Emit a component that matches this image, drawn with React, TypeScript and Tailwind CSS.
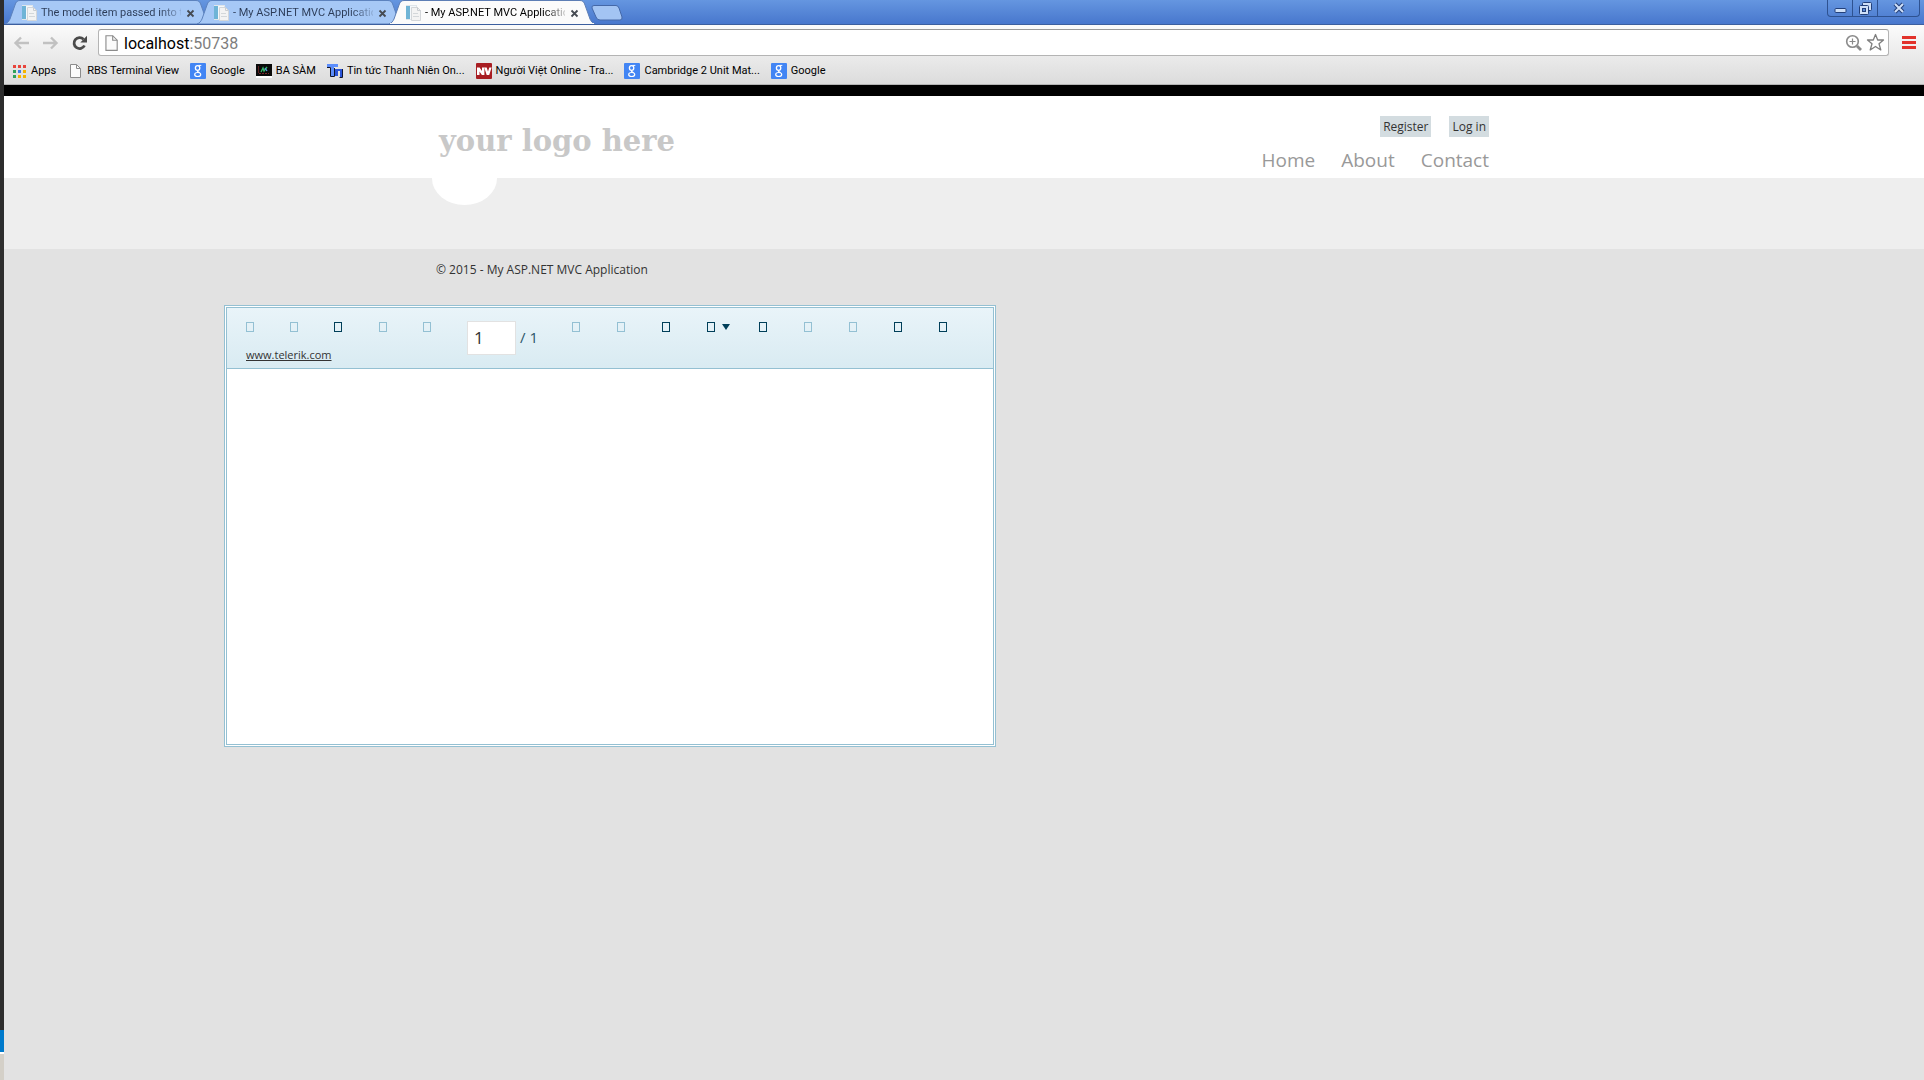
import type { ReactNode } from "react";

const TABS = [
  { title: "The model item passed into t", active: false },
  { title: "- My ASP.NET MVC Applicatio", active: false },
  { title: "- My ASP.NET MVC Applicatio", active: true },
];

const MENU = ["Home", "About", "Contact"];

type Tool = { label: string; enabled?: boolean; menu?: boolean };

const LEFT_TOOLS: Tool[] = [
  { label: "Navigate back" },
  { label: "Navigate forward" },
  { label: "Refresh", enabled: true },
  { label: "First page" },
  { label: "Previous page" },
];

const RIGHT_TOOLS: Tool[] = [
  { label: "Next page" },
  { label: "Last page" },
  { label: "Print preview", enabled: true },
  { label: "Export", enabled: true, menu: true },
  { label: "Print", enabled: true },
  { label: "Document map" },
  { label: "Parameters" },
  { label: "Zoom in", enabled: true },
  { label: "Zoom out", enabled: true },
];

function TabFavicon() {
  return (
    <svg width="16" height="16" viewBox="0 0 16 16" className="shrink-0">
      <rect x="0.5" y="0.5" width="10" height="14" fill="#f4f8fb" stroke="#dfe5ea" />
      <rect x="0" y="1" width="4" height="13" fill="#6fb4d6" />
      <path d="M5.5 2.5h6l3 3v10h-9z" fill="#f3f3f3" stroke="#d3d6d9" />
      <path d="M11.5 2.5v3h3" fill="none" stroke="#c9cdd1" />
      <path d="M7 8.5h5M7 11.5h6" stroke="#d3d7da" />
    </svg>
  );
}

function PageIcon({ size }: { size: number }) {
  return (
    <svg width={size} height={size} viewBox="0 0 16 16" className="shrink-0">
      <path d="M3.5 1.5h6l4 4v9h-10z" fill="#fbfbfb" stroke="#8c8c8c" />
      <path d="M9.5 1.5v4h4" fill="none" stroke="#8c8c8c" />
    </svg>
  );
}

function AppsIcon() {
  return (
    <svg width="13" height="13" viewBox="0 0 13 13" className="shrink-0">
      <path d="M0 0h3v3H0zM5 0h3v3H5zM10 0h3v3h-3z" fill="#e8453c" />
      <path d="M0 5h3v3H0zM0 10h3v3H0z" fill="#2fa25b" />
      <path d="M5 5h3v3H5z" fill="#3f7ee8" />
      <path d="M10 5h3v3h-3zM5 10h3v3H5zM10 10h3v3h-3z" fill="#f4b400" />
    </svg>
  );
}

function GoogleIcon() {
  return (
    <svg width="16" height="16" viewBox="0 0 16 16" className="shrink-0">
      <rect width="16" height="16" rx="1" fill="#4285f4" />
      <g fill="none" stroke="#fff">
        <ellipse cx="7.6" cy="5" rx="2.2" ry="2.4" strokeWidth="1.3" />
        <path d="M8.5 2.4h2.8" />
        <path d="M8 7.4c-1.4 1 .6 1.6 1.6 2.4" strokeWidth="1.2" />
        <ellipse cx="7.7" cy="11.5" rx="3" ry="2" strokeWidth="1.2" />
      </g>
    </svg>
  );
}

function ChartIcon() {
  return (
    <svg width="16" height="16" viewBox="0 0 16 16" className="shrink-0">
      <rect width="16" height="14" y="1" fill="#fff" />
      <rect width="16" height="12" y="1" fill="#0a0a0a" />
      <path d="M5 9l2-4 1 3 3-4" fill="none" stroke="#35b868" strokeWidth="1.3" />
      <path d="M9 5l2 3" stroke="#5c9cf0" strokeWidth="1.3" />
      <path d="M2.5 3v7" stroke="#5a2020" />
      <path d="M3 10.5h10" stroke="#7a2a2a" strokeDasharray="2 1" />
    </svg>
  );
}

function ThanhNienIcon() {
  return (
    <svg width="16" height="14" viewBox="0 0 16 14" className="shrink-0">
      <path d="M0 0h11v3H7v9H4V3H0z" fill="#5b8dfb" />
      <path d="M8 5h7v8h-2V7h-2v5H8z" fill="#2a54d8" />
      <path d="M0 3.5h3.5v9h4M7.5 4v8.5M15.5 5v8.5h-3" fill="none" stroke="#10152c" />
    </svg>
  );
}

function NvIcon() {
  return (
    <svg width="16" height="16" viewBox="0 0 16 16" className="shrink-0">
      <rect width="16" height="16" rx="1" fill="#a81d22" />
      <path d="M1 4.5h2.600l2.400 3.500V4.500h2.400V12H5.900L3.500 8.500V12H1z" fill="#fff" />
      <path d="M8.200 4.500h2.500l1.300 4 1.300-4H15.600L13.200 12h-2.500z" fill="#fff" />
    </svg>
  );
}

const BOOKMARKS: { label: string; icon: ReactNode }[] = [
  { label: "Apps", icon: <AppsIcon /> },
  { label: "RBS Terminal View", icon: <PageIcon size={16} /> },
  { label: "Google", icon: <GoogleIcon /> },
  { label: "BA SÀM", icon: <ChartIcon /> },
  { label: "Tin tức Thanh Niên On...", icon: <ThanhNienIcon /> },
  { label: "Người Việt Online - Tra...", icon: <NvIcon /> },
  { label: "Cambridge 2 Unit Mat...", icon: <GoogleIcon /> },
  { label: "Google", icon: <GoogleIcon /> },
];

function BrowserTab({ title, active }: { title: string; active: boolean }) {
  return (
    <div className={`relative -mr-[14px] h-6 w-[206px] ${active ? "z-20" : "z-10"}`}>
      <svg className="absolute inset-0" width="206" height="24" viewBox="0 0 206 24">
        <path
          d="M0 24C3 23 4 21 5 19L10 5C11 2 12 .5 15 .5H191C194 .5 195 2 196 5L201 19C202 21 203 23 206 24Z"
          fill={active ? "#fbfbfb" : "#a6c8f6"}
          stroke={active ? "#5d7eb5" : "#5c82be"}
        />
        {active && <path d="M1 24H205" stroke="#fbfbfb" strokeWidth="2" />}
      </svg>
      <div className="relative flex h-6 items-center pt-0.5 pl-[17px]">
        <TabFavicon />
        <span
          className={`ml-[3px] w-[140px] overflow-hidden bg-linear-to-r bg-clip-text whitespace-nowrap text-transparent ${
            active ? "from-black from-85% to-black/20" : "from-[#2c3c58] from-85% to-[#2c3c58]/20"
          }`}
        >
          {title}
        </span>
        <button type="button" aria-label="Close tab" className="ml-[5px]">
          <svg width="9" height="9" viewBox="0 0 9 9">
            <path d="M1.5 1.5l6 6M7.5 1.5l-6 6" stroke="#454a52" strokeWidth="1.8" />
          </svg>
        </button>
      </div>
    </div>
  );
}

function WindowControls() {
  return (
    <div className="mr-1 ml-auto flex h-[17px] rounded-b border border-t-0 border-[#2e5291] text-[#23407a]">
      <button type="button" aria-label="Minimize" className="flex w-6 items-center justify-center">
        <svg width="13" height="13" viewBox="0 0 13 13">
          <rect x="1" y="6.5" width="11" height="4" rx="1" fill="#cfe0f8" stroke="currentColor" />
        </svg>
      </button>
      <button
        type="button"
        aria-label="Restore"
        className="flex w-[26px] items-center justify-center border-x border-[#2e5291]"
      >
        <svg width="13" height="13" viewBox="0 0 13 13" fill="#cfe0f8" stroke="currentColor">
          <rect x="3.5" y="0.5" width="9" height="8" rx="1" />
          <rect x="0.5" y="3.5" width="9" height="9" rx="1" />
          <rect x="3.5" y="6.5" width="3" height="3" fill="#5b8bd8" />
        </svg>
      </button>
      <button type="button" aria-label="Close" className="flex w-[41px] items-center justify-center">
        <svg width="12" height="12" viewBox="0 0 12 12">
          <path d="M2 2l8 8M10 2l-8 8" stroke="currentColor" strokeWidth="4" />
          <path d="M2 2l8 8M10 2l-8 8" stroke="#cfe0f8" strokeWidth="2" />
        </svg>
      </button>
    </div>
  );
}

function BrowserChrome() {
  return (
    <div className="font-[Roboto,'Noto_Sans',sans-serif] text-[11px] text-black">
      <div className="flex h-[25px] items-start border-b border-[#3c5f9f] bg-linear-to-b from-[#6596e0] to-[#4877cd]">
        <div className="flex pl-px">
          {TABS.map((tab, i) => (
            <BrowserTab key={i} title={tab.title} active={tab.active} />
          ))}
        </div>
        <button type="button" aria-label="New tab" className="mt-[5px] ml-[10px]">
          <svg width="32" height="16" viewBox="0 0 32 16">
            <path
              d="M3 .5H25Q27 .5 28 3L31 12Q31.5 15 29 15H9Q6 15 5 12L1 3Q.5 .5 3 .5Z"
              fill="#a3c4f3"
              stroke="#4468a8"
            />
          </svg>
        </button>
        <WindowControls />
      </div>

      <div className="border-b border-[#b3b3b3] bg-linear-to-b from-[#fbfbfb] to-[#dcdcdc]">
        <div className="flex items-center pt-1 pr-2 pl-[9px]">
          <button type="button" aria-label="Back" className="mr-3">
            <svg width="17" height="16" viewBox="0 0 17 16">
              <path d="M8 2.5L2.5 8L8 13.5M3 8H16" fill="none" stroke="#c1c1c1" strokeWidth="2.4" />
            </svg>
          </button>
          <button type="button" aria-label="Forward" className="mr-3">
            <svg width="17" height="16" viewBox="0 0 17 16">
              <path d="M9 2.5L14.5 8L9 13.5M14 8H1" fill="none" stroke="#c1c1c1" strokeWidth="2.4" />
            </svg>
          </button>
          <button type="button" aria-label="Reload" className="mr-[10px]">
            <svg width="17" height="16" viewBox="0 0 17 16">
              <path d="M12.5 4.2A5.5 5.5 0 1 0 13.5 10.5" fill="none" stroke="#4b4b4b" strokeWidth="2.8" />
              <path d="M16 .8V7.5H9.3Z" fill="#4b4b4b" />
            </svg>
          </button>
          <div className="flex h-[27px] min-w-0 flex-1 items-center rounded-[3px] border border-[#b4b4b4] border-t-[#9a9a9a] bg-white px-[3px]">
            <PageIcon size={18} />
            <div role="textbox" aria-label="Address" className="ml-1 flex-1 pt-0.5 text-base leading-6">
              localhost<span className="text-[#7d7d7d]">:50738</span>
            </div>
            <button type="button" aria-label="Zoom" className="mr-[3px]">
              <svg width="18" height="18" viewBox="0 0 18 18" fill="none" stroke="#8a8a8a">
                <circle cx="7.5" cy="7.5" r="5.8" strokeWidth="1.6" />
                <path d="M12 12l4 4" strokeWidth="2.8" />
                <path d="M4.5 7.5h6M7.5 4.5v6" strokeWidth="1.2" />
              </svg>
            </button>
            <button type="button" aria-label="Bookmark this page">
              <svg width="19" height="19" viewBox="0 0 19 19" fill="none" stroke="#7f7f7f" strokeWidth="1.3">
                <path
                  d="M9.5 1.5L11.7 7H17.5L13 10.8L14.8 17L9.5 13.5L4.2 17L6 10.8L1.5 7H7.3Z"
                  strokeLinejoin="round"
                />
              </svg>
            </button>
          </div>
          <button type="button" aria-label="Menu" className="ml-[13px]">
            <svg width="14" height="13" viewBox="0 0 14 13">
              <path d="M0 0h14v3H0zM0 5h14v3H0zM0 10h14v3H0z" fill="#e2322b" />
            </svg>
          </button>
        </div>
        <div className="flex h-7 items-center gap-[11px] pt-0.5 pl-[7px]">
          {BOOKMARKS.map((b, i) => (
            <a key={i} href="#" className="flex items-center gap-1 whitespace-nowrap">
              <span className="flex w-4 justify-center">{b.icon}</span>
              {b.label}
            </a>
          ))}
        </div>
      </div>
    </div>
  );
}

function SiteHeader() {
  return (
    <header className="border-t-[11px] border-black bg-white">
      <div className="mx-auto flex h-[82px] max-w-[1056px] justify-between px-[3px]">
        <a
          href="#"
          className="mt-[25px] font-['DejaVu_Serif',serif] text-[29px] leading-10 font-bold text-[#c8c8c8]"
        >
          your logo here
        </a>
        <div className="pt-5 text-right">
          <div className="flex justify-end gap-[18px] text-[12px] leading-[21px] text-[#333]">
            <a href="#" className="bg-[#d3dce0] px-[3px]">
              Register
            </a>
            <a href="#" className="bg-[#d3dce0] px-[3px]">
              Log in
            </a>
          </div>
          <nav className="mt-[11px] flex gap-[26px] text-[19px] leading-6 text-[#999]">
            {MENU.map((m) => (
              <a key={m} href="#">
                {m}
              </a>
            ))}
          </nav>
        </div>
      </div>
    </header>
  );
}

function ToolButton({ tool }: { tool: Tool }) {
  return (
    <button
      type="button"
      aria-label={tool.label}
      disabled={!tool.enabled}
      className={`flex h-[10px] items-center gap-[7px] ${tool.menu ? "w-[52px]" : "w-[45px]"} ${
        tool.enabled ? "text-[#003f59]" : "text-[#93c0d3]"
      }`}
    >
      <span className="h-[10px] w-2 border border-current" />
      {tool.menu && (
        <svg width="8" height="6" viewBox="0 0 8 6">
          <path d="M0 0h8L4 6z" fill="currentColor" />
        </svg>
      )}
    </button>
  );
}

function ReportViewer() {
  return (
    <section className="ml-[220px] w-[772px] border border-[#94c0d2] bg-white p-px">
      <div className="border border-[#94c0d2]">
        <div className="flex h-[61px] items-start border-b border-[#94c0d2] bg-linear-to-b from-[#e9f4f9] to-[#d9ebf2] pt-[13px] pl-[19px]">
          <div className="w-[221px] shrink-0">
            <div className="flex pt-px">
              {LEFT_TOOLS.map((t) => (
                <ToolButton key={t.label} tool={t} />
              ))}
            </div>
            <a href="#" className="mt-[13px] block text-[11px] leading-5 text-[#333] underline">
              www.telerik.com
            </a>
          </div>
          <label className="flex shrink-0 items-start gap-1 text-[15px] leading-8 text-[#2c5468]">
            <input
              aria-label="Page number"
              defaultValue="1"
              className="h-[34px] w-[49px] border border-[#e2e2e2] bg-white px-[6px] pb-0.5 text-[17px] text-[#333] outline-none"
            />
            <span className="w-[52px]">/ 1</span>
          </label>
          <div className="flex pt-px">
            {RIGHT_TOOLS.map((t) => (
              <ToolButton key={t.label} tool={t} />
            ))}
          </div>
        </div>
        <div className="h-[375px]" />
      </div>
    </section>
  );
}

export default function App() {
  return (
    <div className="flex min-h-screen">
      <div className="flex w-1 shrink-0 flex-col bg-[#2d2d2d]">
        <div className="mt-auto h-[22px] bg-[#007acc]" />
        <div className="h-7 border-t-2 border-white bg-[#d4d0c8]" />
      </div>
      <div className="min-w-0 flex-1 bg-[#e2e2e2] font-['Open_Sans','Noto_Sans',sans-serif]">
        <BrowserChrome />
        <SiteHeader />
        <main>
          <div className="h-[71px] bg-[#eee]">
            <div className="mx-auto max-w-[1056px]">
              <div className="-ml-1 h-[27px] w-[65px] bg-white [border-radius:0_0_33px_33px/0_0_27px_27px]" />
            </div>
          </div>
          <p className="mx-auto mb-[25px] max-w-[1056px] pt-[11px] text-[12px] leading-5 text-[#333]">
            © 2015 - My ASP.NET MVC Application
          </p>
          <ReportViewer />
        </main>
      </div>
    </div>
  );
}
